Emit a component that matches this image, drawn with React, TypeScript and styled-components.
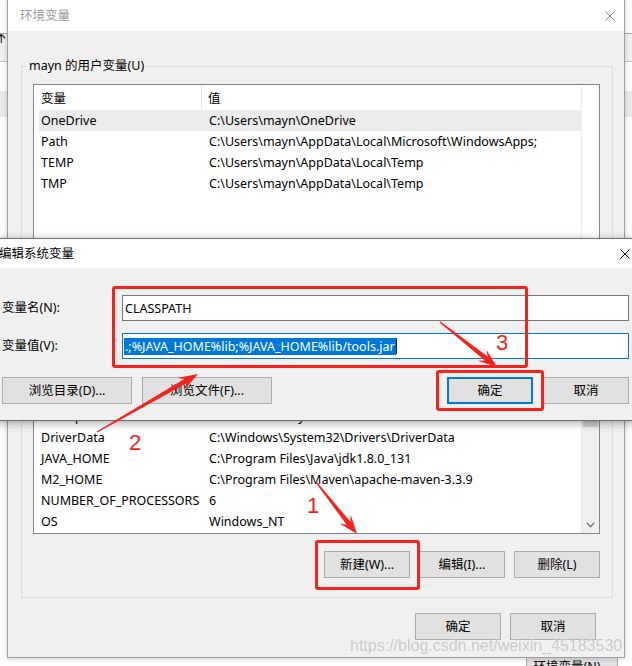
import React from "react";
import styled, { createGlobalStyle } from "styled-components";

const UI_FONT = `"Noto Sans", "Noto Sans CJK SC", sans-serif`;
const UI_SIZE = "12.5px";

const GlobalStyle = createGlobalStyle`
  html, body { margin: 0; padding: 0; background: #ffffff; overflow: hidden; }
  body { font-family: ${UI_FONT}; }
  * { box-sizing: border-box; }
`;

const Stage = styled.div`
  position: relative;
  width: 632px;
  height: 666px;
  overflow: hidden;
  font-family: ${UI_FONT};
  font-size: ${UI_SIZE};
  color: #000;
`;

/* ---------- background window ---------- */
const Backdrop = styled.div`
  width: 632px;
  height: 666px;
  display: flex;
  flex-direction: column;
  background: #fff;
`;
const Band = styled.div<{ $h: number; $bg: string; $line?: string }>`
  height: ${(p) => p.$h}px;
  flex: none;
  background: ${(p) => p.$bg};
  border-bottom: ${(p) => (p.$line ? `1px solid ${p.$line}` : "none")};
  display: flex;
  align-items: flex-start;
  overflow: hidden;
`;
const BandText = styled.span`
  margin-left: -7px;
  margin-top: -6px;
  font-size: 13px;
  line-height: 16px;
`;
const BottomBand = styled.div`
  margin-top: auto;
  height: 9px;
  display: flex;
  justify-content: flex-end;
  padding-right: 14px;
  overflow: hidden;
`;
const BackButton = styled.div`
  width: 92px;
  height: 26px;
  flex: none;
  border: 1px solid #adadad;
  background: #e1e1e1;
  display: flex;
  justify-content: center;
  line-height: 16px;
  padding-top: 1px;
`;

/* ---------- windows ---------- */
const Window = styled.section<{ $x: number; $y: number; $w: number; $h: number; $active?: boolean }>`
  position: absolute;
  left: ${(p) => p.$x}px;
  top: ${(p) => p.$y}px;
  width: ${(p) => p.$w}px;
  height: ${(p) => p.$h}px;
  display: flex;
  flex-direction: column;
  background: #f0f0f0;
  border: 1px solid ${(p) => (p.$active ? "#6f6f6f" : "#a0a0a0")};
  box-shadow: ${(p) =>
    p.$active ? "0 2px 9px rgba(0,0,0,0.35)" : "0 1px 5px rgba(0,0,0,0.18)"};
`;
const TitleBar = styled.header<{ $h: number; $left: number; $right: number }>`
  height: ${(p) => p.$h}px;
  flex: none;
  background: #fff;
  display: flex;
  align-items: center;
  justify-content: space-between;
  padding: 0 ${(p) => p.$right}px 0 ${(p) => p.$left}px;
`;
const TitleText = styled.span<{ $active?: boolean }>`
  font-size: ${UI_SIZE};
  line-height: 16px;
  color: ${(p) => (p.$active ? "#000" : "#9a9a9a")};
  white-space: nowrap;
`;
const CloseIcon = ({ color }: { color: string }) => (
  <svg width="10" height="10" viewBox="0 0 10 10" style={{ display: "block" }}>
    <path d="M0.5 0.5 L9.5 9.5 M9.5 0.5 L0.5 9.5" stroke={color} strokeWidth="1" fill="none" />
  </svg>
);

/* ---------- main dialog ---------- */
const MainBody = styled.div`
  flex: 1;
  display: flex;
  flex-direction: column;
  padding: 27px 11px 0 13px;
`;
const GroupBox = styled.fieldset<{ $gap?: number; $bottom: number }>`
  margin: ${(p) => p.$gap ?? 0}px 0 0 0;
  min-width: 0;
  border: 1px solid #dcdcdc;
  padding: 0 12px ${(p) => p.$bottom}px 11px;
  display: flex;
  flex-direction: column;
`;
const GroupLegend = styled.legend`
  font-size: ${UI_SIZE};
  line-height: 16px;
  padding: 0 2px;
  margin-left: -6px;
  color: #000;
`;
const ListView = styled.div<{ $h: number }>`
  margin-top: 10px;
  height: ${(p) => p.$h}px;
  border: 1px solid #828790;
  background: #fff;
  display: flex;
  overflow: hidden;
`;
const ListContent = styled.div`
  flex: 1;
  min-width: 0;
  padding-left: 5px;
  border-right: 1px solid #ececec;
  overflow: hidden;
`;
const HeaderRow = styled.div`
  height: 25px;
  display: grid;
  grid-template-columns: 163px 1fr;
`;
const HeaderCell = styled.div<{ $sep?: boolean }>`
  display: flex;
  align-items: center;
  padding-left: ${(p) => (p.$sep ? 2 : 6)}px;
  border-right: ${(p) => (p.$sep ? "1px solid #e5e5e5" : "none")};
  white-space: nowrap;
`;
const Row = styled.div<{ $selected?: boolean }>`
  height: 21px;
  display: grid;
  grid-template-columns: 163px 1fr;
  align-items: center;
  background: ${(p) => (p.$selected ? "#ebebeb" : "transparent")};
  white-space: nowrap;
`;
const NameCell = styled.span`
  padding-left: 2px;
  line-height: 16px;
`;
const ValueCell = styled.span`
  padding-left: 7px;
  line-height: 16px;
`;
const Gutter = styled.div`
  width: 17px;
  flex: none;
  background: #fff;
`;
const ScrollBar = styled.div`
  width: 17px;
  flex: none;
  background: #f0f0f0;
  display: flex;
  flex-direction: column;
`;
const ScrollArrow = styled.div`
  height: 17px;
  flex: none;
  display: flex;
  align-items: center;
  justify-content: center;
`;
const ScrollSpace = styled.div<{ $h?: number }>`
  height: ${(p) => (p.$h != null ? `${p.$h}px` : "auto")};
  flex: ${(p) => (p.$h != null ? "none" : "1")};
`;
const ScrollThumb = styled.div`
  height: 51px;
  flex: none;
  margin: 0 1px;
  background: #cdcdcd;
`;
const ButtonRow = styled.div<{ $top: number; $gap: number; $right?: number }>`
  display: flex;
  justify-content: flex-end;
  gap: ${(p) => p.$gap}px;
  margin-top: ${(p) => p.$top}px;
  margin-right: ${(p) => p.$right ?? 0}px;
`;
const Button = styled.div<{ $w: number; $default?: boolean }>`
  width: ${(p) => p.$w}px;
  height: 27px;
  flex: none;
  background: #e1e1e1;
  border: ${(p) => (p.$default ? "2px solid #0078d7" : "1px solid #adadad")};
  display: flex;
  align-items: center;
  justify-content: center;
  font-size: ${UI_SIZE};
  line-height: 16px;
  white-space: nowrap;
`;

/* ---------- edit dialog ---------- */
const EditBody = styled.div`
  flex: 1;
  display: grid;
  grid-template-columns: 120px 1fr;
  grid-auto-rows: 26px;
  row-gap: 12px;
  align-items: center;
  padding: 27px 10px 16px 13px;
`;
const FieldLabel = styled.label`
  font-size: ${UI_SIZE};
  line-height: 16px;
  white-space: nowrap;
`;
const TextBox = styled.div<{ $focused?: boolean }>`
  height: 26px;
  background: #fff;
  border: 1px solid ${(p) => (p.$focused ? "#0078d7" : "#7a7a7a")};
  display: flex;
  align-items: center;
  padding-left: ${(p) => (p.$focused ? 1 : 2)}px;
  white-space: nowrap;
  overflow: hidden;
`;
const Selection = styled.span`
  background: #0078d7;
  color: #fff;
  line-height: 17px;
  padding: 0 1px;
`;
const Caret = styled.span`
  width: 1px;
  height: 16px;
  background: #222;
`;
const EditButtons = styled.div`
  grid-column: 1 / -1;
  align-self: start;
  margin-top: 6px;
  display: flex;
  gap: 10px;
`;
const Spacer = styled.div`
  flex: 1;
`;

/* ---------- annotations ---------- */
const RED = "#f5231b";
const RedBox = styled.div<{ $x: number; $y: number; $w: number; $h: number }>`
  position: absolute;
  left: ${(p) => p.$x}px;
  top: ${(p) => p.$y}px;
  width: ${(p) => p.$w}px;
  height: ${(p) => p.$h}px;
  border: 3px solid ${RED};
  border-radius: 3px;
`;
const StepNumber = styled.span<{ $x: number; $y: number }>`
  position: absolute;
  left: ${(p) => p.$x}px;
  top: ${(p) => p.$y}px;
  font-family: "Liberation Sans", Arial, sans-serif;
  font-size: 22px;
  line-height: 22px;
  color: ${RED};
`;
const ArrowLayer = styled.svg`
  position: absolute;
  left: 0;
  top: 0;
  width: 632px;
  height: 666px;
  pointer-events: none;
`;
const Watermark = styled.span`
  position: absolute;
  left: 350px;
  top: 637px;
  font-family: "Liberation Sans", Arial, sans-serif;
  font-size: 16px;
  line-height: 18px;
  color: rgba(170, 170, 170, 0.62);
  text-shadow: 0 0 1px rgba(255, 255, 255, 0.9);
  white-space: nowrap;
`;

function arrowPoints(x1: number, y1: number, x2: number, y2: number, head = 18, half = 7) {
  const dx = x2 - x1;
  const dy = y2 - y1;
  const len = Math.hypot(dx, dy);
  const ux = dx / len;
  const uy = dy / len;
  const nx = -uy;
  const ny = ux;
  const bx = x2 - ux * head;
  const by = y2 - uy * head;
  const kx = x2 - ux * head * 0.72;
  const ky = y2 - uy * head * 0.72;
  const pts: [number, number][] = [
    [x1 + nx * 0.6, y1 + ny * 0.6],
    [kx + nx * 2.4, ky + ny * 2.4],
    [bx + nx * half, by + ny * half],
    [x2, y2],
    [bx - nx * half, by - ny * half],
    [kx - nx * 2.4, ky - ny * 2.4],
    [x1 - nx * 0.6, y1 - ny * 0.6],
  ];
  return pts.map((p) => `${p[0].toFixed(1)},${p[1].toFixed(1)}`).join(" ");
}

const userVars: [string, string][] = [
  ["OneDrive", "C:\\Users\\mayn\\OneDrive"],
  ["Path", "C:\\Users\\mayn\\AppData\\Local\\Microsoft\\WindowsApps;"],
  ["TEMP", "C:\\Users\\mayn\\AppData\\Local\\Temp"],
  ["TMP", "C:\\Users\\mayn\\AppData\\Local\\Temp"],
];

const systemVars: [string, string][] = [
  ["asl.log", "Destination=file"],
  ["CATALINA_HOME", "D:\\apache-tomcat-8.5.37"],
  ["ComSpec", "C:\\WINDOWS\\system32\\cmd.exe"],
  ["DriverData", "C:\\Windows\\System32\\Drivers\\DriverData"],
  ["JAVA_HOME", "C:\\Program Files\\Java\\jdk1.8.0_131"],
  ["M2_HOME", "C:\\Program Files\\Maven\\apache-maven-3.3.9"],
  ["NUMBER_OF_PROCESSORS", "6"],
  ["OS", "Windows_NT"],
];

function VarList({ rows, height, selected, scroll }: { rows: [string, string][]; height: number; selected?: number; scroll?: boolean }) {
  return (
    <ListView $h={height}>
      <ListContent>
        <HeaderRow>
          <HeaderCell $sep>变量</HeaderCell>
          <HeaderCell>值</HeaderCell>
        </HeaderRow>
        {rows.map(([n, v], i) => (
          <Row key={n} $selected={i === selected}>
            <NameCell>{n}</NameCell>
            <ValueCell>{v}</ValueCell>
          </Row>
        ))}
      </ListContent>
      {scroll ? (
        <ScrollBar>
          <ScrollArrow />
          <ScrollSpace $h={20} />
          <ScrollThumb />
          <ScrollSpace />
          <ScrollArrow>
            <svg width="9" height="6" viewBox="0 0 9 6" style={{ display: "block" }}>
              <path d="M0.8 0.8 L4.5 4.6 L8.2 0.8" stroke="#606060" strokeWidth="1.2" fill="none" />
            </svg>
          </ScrollArrow>
        </ScrollBar>
      ) : (
        <Gutter />
      )}
    </ListView>
  );
}

export default function App() {
  return (
    <Stage>
      <GlobalStyle />
      <Backdrop>
        <Band $h={34} $bg="#ffffff" $line="#a8a8a8" />
        <Band $h={28} $bg="#f0f0f0" $line="#c4c4c4">
          <BandText>环</BandText>
        </Band>
        <Band $h={29} $bg="#ffffff" />
        <Band $h={26} $bg="#e9e9e9" />
        <BottomBand>
          <BackButton>环境变量(N)...</BackButton>
        </BottomBand>
      </Backdrop>

      <Window $x={7} $y={-1} $w={618} $h={659}>
        <TitleBar $h={31} $left={12} $right={9}>
          <TitleText>环境变量</TitleText>
          <CloseIcon color="#8a8a8a" />
        </TitleBar>
        <MainBody>
          <GroupBox $bottom={18}>
            <GroupLegend>mayn 的用户变量(U)</GroupLegend>
            <VarList rows={userVars} height={156} selected={0} />
            <ButtonRow $top={17} $gap={9}>
              <Button $w={86}>新建(N)...</Button>
              <Button $w={86}>编辑(E)...</Button>
              <Button $w={86}>删除(D)</Button>
            </ButtonRow>
          </GroupBox>
          <GroupBox $gap={9} $bottom={19}>
            <GroupLegend>系统变量(S)</GroupLegend>
            <VarList rows={systemVars} height={196} scroll />
            <ButtonRow $top={17} $gap={9}>
              <Button $w={86}>新建(W)...</Button>
              <Button $w={86}>编辑(I)...</Button>
              <Button $w={86}>删除(L)</Button>
            </ButtonRow>
          </GroupBox>
          <ButtonRow $top={15} $gap={9} $right={17}>
            <Button $w={86}>确定</Button>
            <Button $w={86}>取消</Button>
          </ButtonRow>
        </MainBody>
      </Window>

      <Window $x={-12} $y={238} $w={652} $h={183} $active>
        <TitleBar $h={29} $left={10} $right={9}>
          <TitleText $active>编辑系统变量</TitleText>
          <CloseIcon color="#111" />
        </TitleBar>
        <EditBody>
          <FieldLabel>变量名(N):</FieldLabel>
          <TextBox>CLASSPATH</TextBox>
          <FieldLabel>变量值(V):</FieldLabel>
          <TextBox $focused>
            <Selection>.;%JAVA_HOME%lib;%JAVA_HOME%lib/tools.jar</Selection>
            <Caret />
          </TextBox>
          <EditButtons>
            <Button $w={130}>浏览目录(D)...</Button>
            <Button $w={130}>浏览文件(F)...</Button>
            <Spacer />
            <Button $w={86} $default>确定</Button>
            <Button $w={86}>取消</Button>
          </EditButtons>
        </EditBody>
      </Window>

      <Watermark>https://blog.csdn.net/weixin_45183530</Watermark>

      <RedBox $x={112} $y={286} $w={416} $h={82} />
      <RedBox $x={436} $y={370} $w={108} $h={41} />
      <RedBox $x={315} $y={540} $w={105} $h={50} />

      <ArrowLayer viewBox="0 0 632 666">
        <polygon points={arrowPoints(440, 322, 497, 367, 19, 7)} fill={RED} />
        <polygon points={arrowPoints(97, 432, 198, 374, 20, 7)} fill={RED} />
        <polygon points={arrowPoints(316, 482, 357, 534, 19, 7)} fill={RED} />
      </ArrowLayer>

      <StepNumber $x={496} $y={332}>3</StepNumber>
      <StepNumber $x={129} $y={432}>2</StepNumber>
      <StepNumber $x={307} $y={495}>1</StepNumber>
    </Stage>
  );
}
